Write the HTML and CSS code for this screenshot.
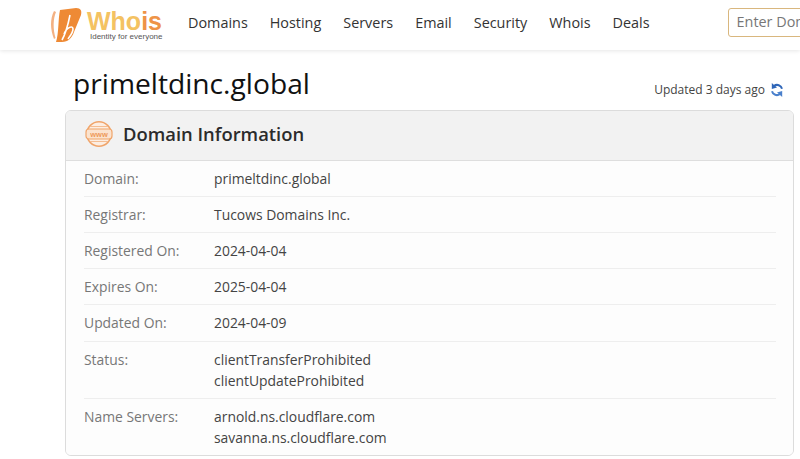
FILE: index.html
```html
<!DOCTYPE html>
<html lang="en">
<head>
<meta charset="utf-8">
<title>primeltdinc.global</title>
<link rel="stylesheet" href="styles.css">
</head>
<body>
<header class="topbar">
  <a class="logo">
    <svg class="logo-mark" viewBox="0 0 32 36" width="32" height="36">
      <path d="M4 4 C0 12 0 22 4 32 L5.5 31 C3 22 3 12 6 5Z" fill="#f3b183"/>
      <path d="M10 3 L26 1 C31 1 32 4 31 8 L24 25 C22 31 18 35 12 35 L6 35 C9 26 8 12 10 3Z" fill="#ee8a35"/>
      <path d="M20 8 C18 18 16 26 12 33 M14 27 C17 20 23 18 23 22 C23 26 20 29 18 32" fill="none" stroke="#fff" stroke-width="1.6"/>
    </svg>
    <span class="logo-text">
      <span class="logo-name"><span class="logo-wh">Who</span><span class="logo-is">is</span></span>
      <span class="logo-tag">Identity for everyone</span>
    </span>
  </a>
  <nav class="nav">
    <a>Domains</a><a>Hosting</a><a>Servers</a><a>Email</a><a>Security</a><a>Whois</a><a>Deals</a>
  </nav>
  <div class="search">Enter Domain</div>
</header>
<main class="page">
  <div class="title-row">
    <h1>primeltdinc.global</h1>
    <div class="updated">Updated 3 days ago
      <svg viewBox="0 0 12 16" width="12" height="16" class="refresh">
        <path d="M11 6.8 A5 5 0 0 0 3 4" fill="none" stroke="#2f66b8" stroke-width="2"/>
        <path d="M1 9.2 A5 5 0 0 0 9 12" fill="none" stroke="#4a80cc" stroke-width="2"/>
        <path d="M0.8 1 L0.8 7 L6 5.4Z" fill="#2f66b8"/>
        <path d="M11.2 15 L11.2 9 L6 10.6Z" fill="#4a80cc"/>
      </svg>
    </div>
  </div>
  <section class="card">
    <div class="card-head">
      <svg class="www" viewBox="0 0 28 28" width="28" height="28">
        <circle cx="14" cy="14" r="12.2" fill="#fdeee2" stroke="#f0a56b" stroke-width="1.5"/>
        <path d="M5 6.5 H23 M5 21.5 H23" stroke="#f4bd92" stroke-width="1"/>
        <rect x="1" y="9" width="26" height="10" rx="3" fill="#fbe3cf" stroke="#f0a56b" stroke-width="1.2"/>
        <text x="14" y="16.6" class="www-text">www</text>
      </svg>
      <h2>Domain Information</h2>
    </div>
    <div class="rows">
      <div class="row"><div class="label">Domain:</div><div class="value">primeltdinc.global</div></div>
      <div class="row"><div class="label">Registrar:</div><div class="value">Tucows Domains Inc.</div></div>
      <div class="row"><div class="label">Registered On:</div><div class="value">2024-04-04</div></div>
      <div class="row"><div class="label">Expires On:</div><div class="value">2025-04-04</div></div>
      <div class="row row-tall"><div class="label">Updated On:</div><div class="value">2024-04-09</div></div>
      <div class="row"><div class="label">Status:</div><div class="value">clientTransferProhibited<br>clientUpdateProhibited</div></div>
      <div class="row"><div class="label">Name Servers:</div><div class="value">arnold.ns.cloudflare.com<br>savanna.ns.cloudflare.com</div></div>
    </div>
  </section>
</main>
</body>
</html>
```
FILE: styles.css
```css
* { box-sizing: border-box; }
html, body { margin: 0; height: 100%; overflow: hidden; }
body { background: #fff; color: #212529; font-family: "Open Sans", sans-serif; width: 800px; height: 459px; }
.topbar { height: 50px; display: flex; align-items: center; padding-left: 50px; box-shadow: 0 1px 4px rgba(0,0,0,.1); white-space: nowrap; overflow: hidden; }
.logo { display: flex; align-items: flex-start; gap: 5px; width: 138px; flex: none; height: 50px; padding-top: 7px; }
.logo-mark { flex: none; }
.logo-text { display: flex; flex-direction: column; padding-top: 2px; }
.logo-name { font: 700 25px/24px "Liberation Sans", sans-serif; }
.logo-wh { color: #f4c262; }
.logo-is { color: #ee9347; }
.logo-tag { font: 8px/8px "Liberation Sans", sans-serif; color: #555; padding-left: 3px; }
.nav { display: flex; gap: 22px; font-size: 14.4px; color: #333; font-weight: 500; flex: none; padding-bottom: 6px; }
.search { flex: none; width: 120px; height: 29px; margin-left: 78px; margin-bottom: 5px; border: 1px solid #d9b77e; border-radius: 3px; padding: 0 8px; font-size: 14.4px; line-height: 26px; color: #777; overflow: hidden; }
.page { padding: 0 6px 0 65px; }
.title-row { display: flex; justify-content: space-between; align-items: center; height: 60px; padding: 10px 11px 0 8px; }
h1 { margin: 0; font-size: 28.2px; font-weight: 400; color: #111; line-height: 40px; position: relative; top: -2px; }
.updated { font-size: 12px; color: #444; display: flex; align-items: center; gap: 6px; padding-top: 9px; }
.card { border: 1px solid #dcdcdc; border-radius: 6px; height: 346px; overflow: hidden; }
.card-head { height: 50px; background: #f2f2f2; border-bottom: 1px solid #dedede; display: flex; align-items: center; gap: 10px; padding: 0 0 4px 19px; }
.www-text { font: 700 7.5px "Liberation Sans", sans-serif; fill: #ee9a5a; text-anchor: middle; }
h2 { margin: 0; font-size: 18.4px; font-weight: 600; color: #2b2b2b; }
.rows { padding: 0 17px 0 18px; background: #fdfdfd; height: 100%; }
.row { display: flex; border-bottom: 1px solid #eee; padding: 7px 0; font-size: 13.9px; line-height: 21px; }
.row-tall { padding-bottom: 8px; }
.row:last-child { border-bottom: 0; }
.label { width: 130px; color: #777; flex: none; }
.value { color: #444; }
```
